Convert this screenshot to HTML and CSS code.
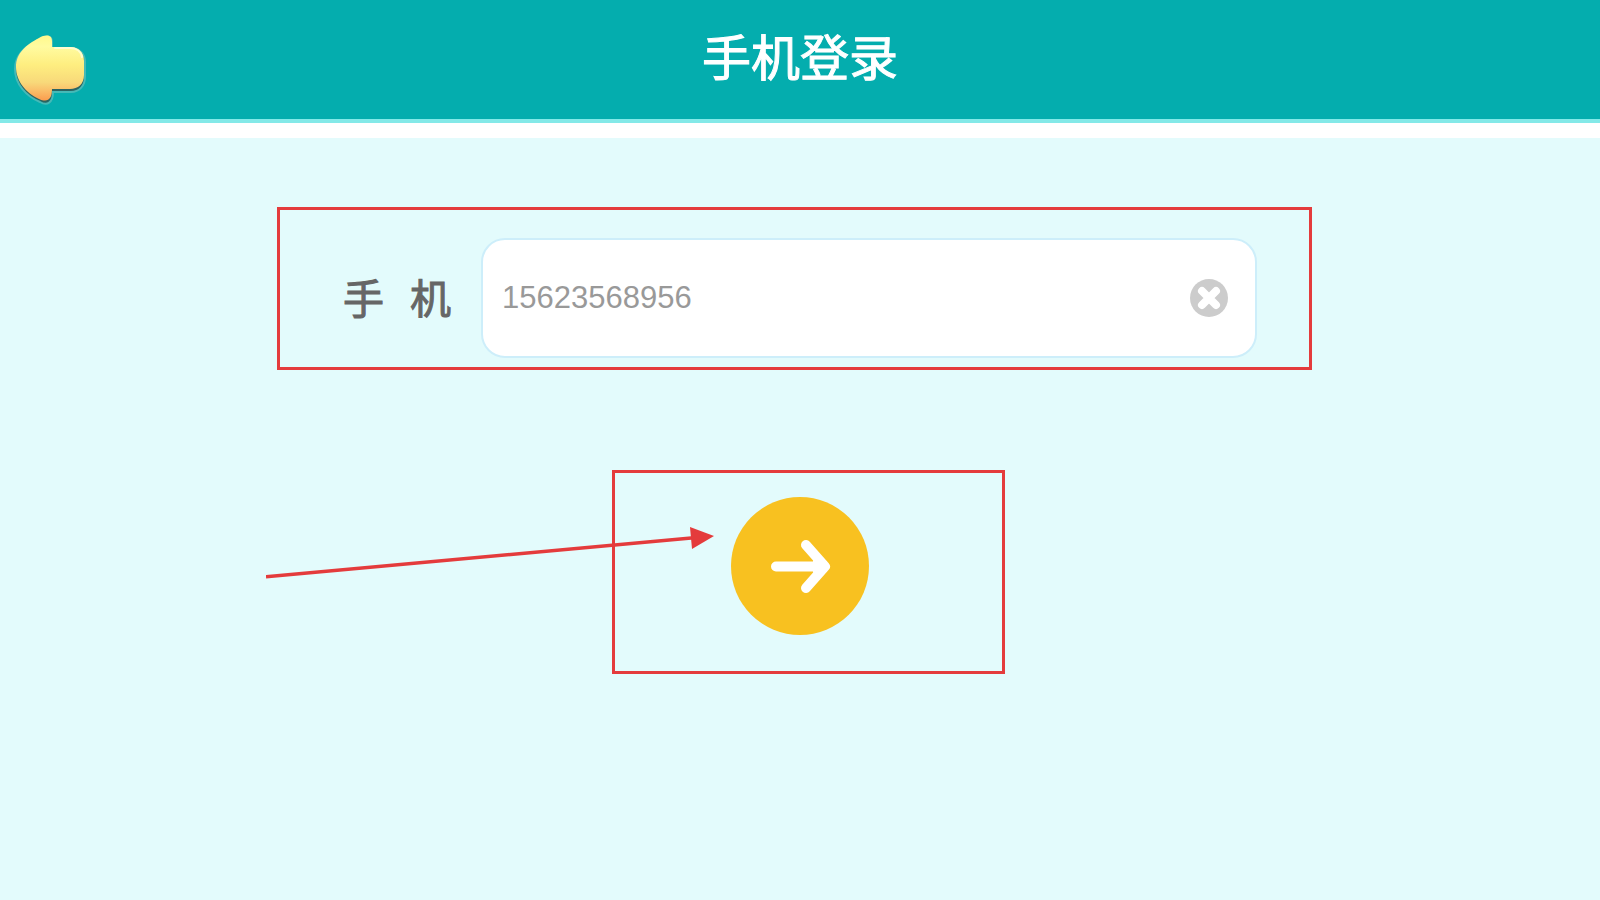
FILE: index.html
```html
<!DOCTYPE html>
<html lang="zh-CN">
<head>
    <meta charset="UTF-8">
    <meta name="viewport" content="width=device-width, initial-scale=1.0">
    <title>手机登录</title>
    <link rel="stylesheet" href="styles.css">
</head>
<body>
    <header class="header">
        <button type="button" class="back-btn" aria-label="返回">
            <svg width="76" height="76" viewBox="0 0 76 76">
                <defs>
                    <linearGradient id="gold" x1="0" y1="0" x2="0" y2="1">
                        <stop offset="0" stop-color="#fff98c"/>
                        <stop offset="0.17" stop-color="#fffba0"/>
                        <stop offset="0.45" stop-color="#feee80"/>
                        <stop offset="0.72" stop-color="#f8d97a"/>
                        <stop offset="0.84" stop-color="#fac06a"/>
                        <stop offset="1" stop-color="#fb9c4e"/>
                    </linearGradient>
                </defs>
                <path d="M28 10C35 5 40 7 40 13V19H59C67 19 73 24 73 33V48C73 57 67 63 59 63H41C41 74 35 77 28 73C14 67 3 55 3 40C3 25 15 16 28 10Z" fill="#2a6462" stroke="#45b9b7" stroke-width="2"/>
                <path d="M27 9C34 5 40 6 40 12V18H58C66 18 72 23 72 32V46C72 55 66 60 58 60H40C40 70 36 74 27 70C14 64 4 52 4 38C4 24 14 16 27 9Z" fill="url(#gold)"/>
                <path d="M43 19H58C64 19 69 22 70 28" fill="none" stroke="#fffdd0" stroke-width="2" stroke-linecap="round"/>
            </svg>
        </button>
        <h1 class="title">手机登录</h1>
    </header>

    <main class="content">
        <form class="login-form">
            <div class="phone-row">
                <label class="phone-label" for="phone"><span>手</span> <span>机</span></label>
                <div class="phone-field">
                    <input type="tel" id="phone" class="phone-input" value="15623568956">
                    <button type="button" class="clear-btn" id="clearBtn" aria-label="清空">
                        <svg width="38" height="38" viewBox="0 0 38 38">
                            <circle cx="19" cy="19" r="19" fill="#cccccc"/>
                            <path d="M12 12L26 26M26 12L12 26" stroke="#fff" stroke-width="8" stroke-linecap="round"/>
                        </svg>
                    </button>
                </div>
                <div class="mark mark-phone"></div>
            </div>

            <div class="submit-row">
                <button type="submit" class="submit-btn" aria-label="登录">
                    <svg width="138" height="138" viewBox="0 0 138 138">
                        <path d="M45 69.5H92M75 48L94 69.5L75 91" fill="none" stroke="#fff" stroke-width="10" stroke-linecap="round" stroke-linejoin="round"/>
                        <path d="M82 63L94 69.5L82 76Z" fill="#fff"/>
                    </svg>
                </button>
                <div class="mark mark-submit"></div>
                <svg class="pointer" width="450" height="60" viewBox="0 0 450 60">
                    <path d="M0 51.8L428 12.8" stroke="#e43b3c" stroke-width="3.4"/>
                    <path d="M424 2L448 11L426 24Z" fill="#e43b3c"/>
                </svg>
            </div>
        </form>
    </main>

    <script>
        const phone = document.getElementById('phone');

        // 清空手机号
        document.getElementById('clearBtn').addEventListener('click', function() {
            phone.value = '';
            phone.focus();
        });
    </script>
</body>
</html>
```
FILE: styles.css
```css
* {
    box-sizing: border-box;
}

body {
    margin: 0;
    min-height: 100vh;
    display: flex;
    flex-direction: column;
    background-color: #e3fbfc;
    font-family: "Liberation Sans", "Noto Sans CJK SC", sans-serif;
}

button {
    padding: 0;
    border: none;
    background: none;
    cursor: pointer;
}

button svg {
    display: block;
}

.header {
    display: grid;
    grid-template-columns: 100px 1fr 100px;
    height: 123px;
    background-color: #04adae;
    border-bottom: 4px solid #83e9e8;
}

.back-btn {
    justify-self: start;
    align-self: end;
    margin: 0 0 14px 12px;
}

.title {
    margin: 0;
    color: #fff;
    font-size: 49px;
    font-weight: normal;
    line-height: 118px;
    text-align: center;
    -webkit-text-stroke: 1px #fff;
}

.content {
    flex: 1;
    padding-top: 100px;
    border-top: 15px solid #fff;
}

.login-form {
    display: flex;
    flex-direction: column;
    align-items: center;
    gap: 139px;
}

.phone-row {
    position: relative;
    display: flex;
    align-items: center;
    gap: 30px;
    width: 100%;
    max-width: 914px;
}

.phone-label {
    display: flex;
    gap: 26px;
    padding-top: 4px;
    color: #666;
    font-size: 41px;
    line-height: 60px;
    -webkit-text-stroke: 1px #666;
}

.phone-field {
    flex: 1;
    display: flex;
    align-items: center;
    height: 120px;
    padding: 0 27px 0 19px;
    background-color: #fff;
    border: 2px solid #cdeefa;
    border-radius: 24px;
}

.phone-input {
    flex: 1;
    min-width: 0;
    padding: 0;
    border: none;
    outline: none;
    background: none;
    color: #999;
    font-family: inherit;
    font-size: 31px;
}

.submit-row {
    position: relative;
}

.submit-btn {
    display: block;
    width: 138px;
    height: 138px;
    border-radius: 50%;
    background-color: #f8c120;
}

/* 红色标注 */
.mark {
    position: absolute;
    border: 3px solid #e43b3c;
    pointer-events: none;
}

.mark-phone {
    inset: -31px -55px -12px -66px;
}

.mark-submit {
    inset: -27px -136px -39px -119px;
}

.pointer {
    position: absolute;
    top: 28px;
    right: 153px;
    pointer-events: none;
}
```
